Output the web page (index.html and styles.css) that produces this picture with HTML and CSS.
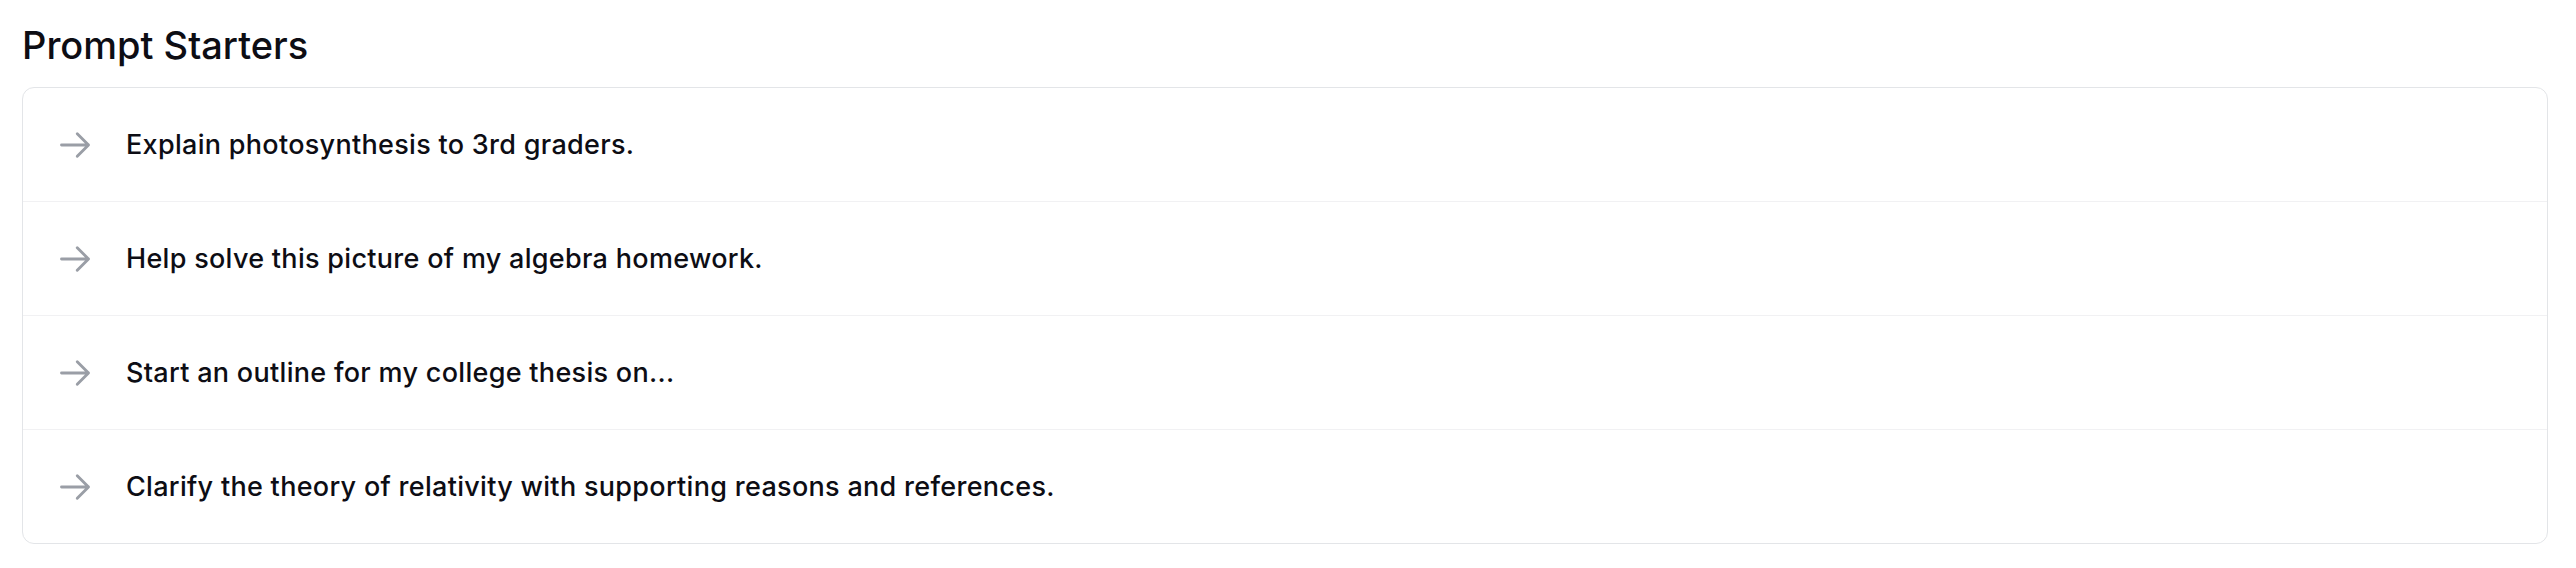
FILE: index.html
```html
<!DOCTYPE html>
<html lang="en">
<head>
<meta charset="utf-8">
<title>Prompt Starters</title>
<link rel="stylesheet" href="styles.css">
</head>
<body>
  <section class="starters">
    <h2 class="starters-title">Prompt Starters</h2>
    <ul class="starters-list">
      <li class="starter">
        <svg class="starter-icon" viewBox="0 0 24 24" fill="none" stroke="currentColor" stroke-width="1.9" stroke-linecap="round" stroke-linejoin="round"><path d="M13.5 4.5 21 12m0 0-7.5 7.5M21 12H3"/></svg>
        <span class="starter-text">Explain photosynthesis to 3rd graders.</span>
      </li>
      <li class="starter">
        <svg class="starter-icon" viewBox="0 0 24 24" fill="none" stroke="currentColor" stroke-width="1.9" stroke-linecap="round" stroke-linejoin="round"><path d="M13.5 4.5 21 12m0 0-7.5 7.5M21 12H3"/></svg>
        <span class="starter-text">Help solve this picture of my algebra homework.</span>
      </li>
      <li class="starter">
        <svg class="starter-icon" viewBox="0 0 24 24" fill="none" stroke="currentColor" stroke-width="1.9" stroke-linecap="round" stroke-linejoin="round"><path d="M13.5 4.5 21 12m0 0-7.5 7.5M21 12H3"/></svg>
        <span class="starter-text">Start an outline for my college thesis on...</span>
      </li>
      <li class="starter">
        <svg class="starter-icon" viewBox="0 0 24 24" fill="none" stroke="currentColor" stroke-width="1.9" stroke-linecap="round" stroke-linejoin="round"><path d="M13.5 4.5 21 12m0 0-7.5 7.5M21 12H3"/></svg>
        <span class="starter-text">Clarify the theory of relativity with supporting reasons and references.</span>
      </li>
    </ul>
  </section>
</body>
</html>
```
FILE: styles.css
```css
html, body {
  margin: 0;
  background: #ffffff;
}
body {
  padding: 22px 28px 0 22px;
  font-family: Inter, "Noto Sans", "Liberation Sans", sans-serif;
  color: #0d0d14;
}
.starters-title {
  margin: 0 0 19px 0;
  font-size: 38px;
  line-height: 46px;
  font-weight: 500;
}
.starters-list {
  list-style: none;
  margin: 0;
  padding: 0;
  border: 1px solid #e3e5e8;
  border-radius: 12px;
}
.starter {
  display: flex;
  align-items: center;
  height: 113px;
  padding-left: 34px;
  gap: 33px;
}
.starter + .starter {
  border-top: 1px solid #f1f1f3;
}
.starter-icon {
  width: 36px;
  height: 36px;
  color: #9a9ea6;
  flex: none;
}
.starter-text {
  font-size: 27px;
  line-height: 36px;
  font-weight: 500;
  letter-spacing: 0.3px;
}
```
